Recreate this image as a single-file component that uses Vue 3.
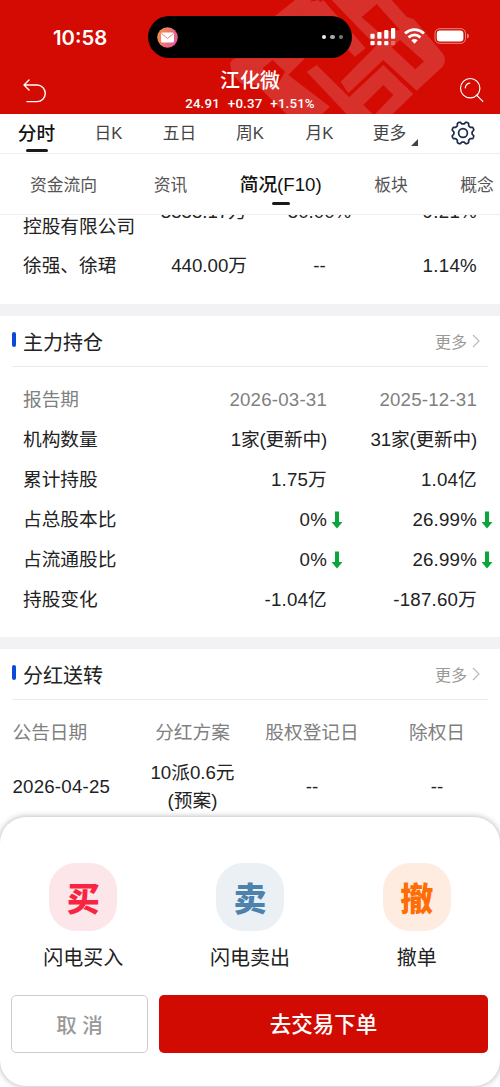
<template>
  <div class="phone">
    <header class="header">
      <svg class="pattern" width="500" height="114" viewBox="0 0 500 114">
        <g transform="translate(220 0) scale(.3333)" fill="#d8302b" fill-rule="evenodd">
          <path d="M335 0H515L560 50L582 58L668 160Q682 180 668 200L590 272L490 180L385 280L362 245L468 138zM425 52L475 95L540 90L470 12zM540 120L515 142L586 208L612 184z" />
          <path d="M280 20L310 0L437 145L405 170L280 48z" />
          <path d="M490 195L580 282L512 348H425L378 300zM490 255L430 315L462 346L520 285z" />
          <path d="M260 215L290 195L445 348H385z" />
          <path d="M30 190Q35 172 62 175H255L205 225L330 320L300 348H205L110 255L62 250Q32 225 30 190zM128 205L175 250L195 215L158 180z" />
          <path d="M225 0H275L165 110V48zM270 5L295 0L345 50H225z" />
        </g>
      </svg>
      <div class="status">
        <span class="time">10:58</span>
        <div class="island">
          <svg width="21" height="21" viewBox="0 0 21 21">
            <defs>
              <linearGradient id="mail" x1="0" y1="0" x2="1" y2=".5">
                <stop offset="0" stop-color="#f29a3e" />
                <stop offset="1" stop-color="#e9599a" />
              </linearGradient>
            </defs>
            <circle cx="10.5" cy="10.5" r="10.3" fill="url(#mail)" />
            <rect x="4" y="5.5" width="13" height="10" rx="1.5" fill="#fff" />
            <path d="M4.5 6.5l6 5 6-5" fill="none" stroke="#ec8467" stroke-width="1" />
          </svg>
          <div class="dots"><i></i><i></i><i></i></div>
        </div>
        <svg class="signals" width="100" height="20" viewBox="0 0 100 20" fill="#fff">
          <rect x="0.4" y="6.7" width="4.2" height="5" rx="1" />
          <rect x="7.3" y="5" width="4.2" height="6.7" rx="1" />
          <rect x="14.2" y="3" width="4.2" height="8.7" rx="1" />
          <rect x="21" y="1" width="4.2" height="10.7" rx="1" />
          <rect x="0.4" y="14" width="4.2" height="4.3" rx="1" />
          <rect x="7.3" y="14" width="4.2" height="4.3" rx="1" />
          <rect x="14.2" y="14" width="4.2" height="4.3" rx="1" />
          <rect x="21" y="14" width="4.2" height="4.3" rx="1" opacity=".3" />
          <g fill="none" stroke="#fff" stroke-width="2.8">
            <path d="M35 6.4q9.500-7.600 19 0" />
            <path d="M38.500 10.300q6-4.800 12 0" />
          </g>
          <path d="M41.300 13.200q3.200-2.600 6.400 0L44.500 16.700z" />
          <rect x="65" y="1.700" width="30.500" height="14.600" rx="4.600" fill="none" stroke="#fff" stroke-opacity=".5" />
          <rect x="66.800" y="3.500" width="26.600" height="11" rx="3" />
          <path d="M97 6.600q2 .8 2 2.400t-2 2.400z" opacity=".5" />
        </svg>
      </div>
      <div class="nav">
        <svg width="26" height="26" viewBox="0 0 26 26" fill="none" stroke="#fff" stroke-width="1.4" stroke-linecap="round" stroke-linejoin="round">
          <path d="M7 3L2 8l5 5M2.500 8H15a8.300 8.300 0 0 1 0 16.600H5" />
        </svg>
        <div class="stock">
          <div class="stock-name">江化微</div>
          <div class="quote"><span>24.91</span><span>+0.37</span><span>+1.51%</span></div>
        </div>
        <svg width="26" height="26" viewBox="0 0 26 26" fill="none" stroke="#fff" stroke-width="1.200" stroke-linecap="round">
          <circle cx="11.200" cy="11.200" r="9.700" />
          <path d="M6.300 10.800q.5-4 4.500-4.600M17.800 18.300l6 6" />
          <path d="M17.300 18.400l1.500-1" />
        </svg>
      </div>
    </header>

    <nav class="tabs">
      <span v-for="(t, i) in tabs" :key="t" class="tab" :class="{ active: i === 0, more: t === '更多' }">{{ t }}</span>
      <span class="gear">
        <svg width="26" height="26" viewBox="0 0 26 26" fill="none" stroke="#1b2b4b" stroke-width="1.700" stroke-linejoin="round">
          <path :d="gearPath" />
          <circle cx="13" cy="13" r="4.400" />
        </svg>
      </span>
    </nav>
    <nav class="subtabs">
      <span v-for="t in subtabs" :key="t" class="subtab" :class="{ active: t === '简况(F10)' }">{{ t }}</span>
    </nav>

    <main class="content">
      <section class="holders">
        <div class="holder tall">
          <span><br />控股有限公司</span><span>3555.17万</span><span>50.00%</span><span>9.21%</span>
        </div>
        <div class="holder">
          <span>徐强、徐珺</span><span>440.00万</span><span>--</span><span>1.14%</span>
        </div>
      </section>

      <section class="card">
        <div class="card-title">
          <i class="bar"></i><h3>主力持仓</h3><span class="link">更多</span>
          <svg width="8" height="14" viewBox="0 0 8 14" fill="none" stroke="#bbb" stroke-width="1.200"><path d="M1 1l6 6-6 6" /></svg>
        </div>
        <div class="positions">
          <div v-for="(r, i) in positions" :key="r.name" class="position" :class="{ muted: i === 0 }">
            <span>{{ r.name }}</span>
            <span v-for="v in r.values" :key="v" class="value">
              {{ v }}
              <svg v-if="r.down" class="down" width="12" height="18" viewBox="0 0 12 18" fill="#0aa63c">
                <path d="M4 0.500h4v10.500h3.500L6 17.500 0.500 11H4z" />
              </svg>
            </span>
          </div>
        </div>
      </section>

      <section class="card">
        <div class="card-title">
          <i class="bar"></i><h3>分红送转</h3><span class="link">更多</span>
          <svg width="8" height="14" viewBox="0 0 8 14" fill="none" stroke="#bbb" stroke-width="1.200"><path d="M1 1l6 6-6 6" /></svg>
        </div>
        <div class="dividend muted">
          <span>公告日期</span><span>分红方案</span><span>股权登记日</span><span>除权日</span>
        </div>
        <div class="dividend body">
          <span class="date">2026-04-25</span><span>10派0.6元<br />(预案)</span><span>--</span><span>--</span>
        </div>
      </section>
    </main>

    <div class="sheet">
      <div class="actions">
        <div v-for="a in actions" :key="a.label" class="action">
          <div class="action-icon" :class="a.type">{{ a.icon }}</div>
          <span>{{ a.label }}</span>
        </div>
      </div>
      <div class="buttons">
        <button class="btn cancel">取 消</button>
        <button class="btn trade">去交易下单</button>
      </div>
    </div>
  </div>
</template>

<script setup>
const tabs = ['分时', '日K', '五日', '周K', '月K', '更多']
const subtabs = ['资金流向', '资讯', '简况(F10)', '板块', '概念']

const positions = [
  { name: '报告期', values: ['2026-03-31', '2025-12-31'] },
  { name: '机构数量', values: ['1家(更新中)', '31家(更新中)'] },
  { name: '累计持股', values: ['1.75万', '1.04亿'] },
  { name: '占总股本比', values: ['0%', '26.99%'], down: true },
  { name: '占流通股比', values: ['0%', '26.99%'], down: true },
  { name: '持股变化', values: ['-1.04亿', '-187.60万'] },
]

const actions = [
  { label: '闪电买入', icon: '买', type: 'buy' },
  { label: '闪电卖出', icon: '卖', type: 'sell' },
  { label: '撤单', icon: '撤', type: 'revoke' },
]

// eight rounded teeth
const gearPath = (() => {
  const pts = []
  for (let i = 0; i < 96; i++) {
    const a = (i / 96) * Math.PI * 2
    const r = 10.2 + 1.1 * Math.tanh(2.5 * Math.cos(8 * a + Math.PI))
    pts.push(`${(13 + r * Math.cos(a)).toFixed(2)} ${(13 + r * Math.sin(a)).toFixed(2)}`)
  }
  return 'M' + pts.join('L') + 'z'
})()
</script>

<style>
body { background: #fff; }
</style>

<style scoped>
* { box-sizing: border-box; }
.phone {
  position: relative; width: 500px; height: 1087px; overflow: hidden; background: #fff;
  display: flex; flex-direction: column;
  font-family: "Liberation Sans", "Noto Sans CJK SC", sans-serif; font-size: 18.7px; color: #222;
}

.header { position: relative; height: 114px; flex: none; background: #d30b02; color: #fff; overflow: hidden; }
.pattern { position: absolute; left: 0; top: 0; }
.status { position: relative; display: flex; align-items: center; padding: 16px 0 0 53px; height: 58px; }
.time { width: 95px; font: 600 20.3px/42px Inter, sans-serif; padding-top: 1px; }
.island {
  width: 204px; height: 42px; border-radius: 21px; background: #000;
  display: flex; align-items: center; justify-content: space-between; padding: 0 9px;
}
.dots { display: flex; gap: 4px; }
.dots i { width: 4.4px; height: 4.4px; border-radius: 50%; background: #eee; }
.dots i:nth-child(2) { background: #aaa; }
.dots i:nth-child(3) { background: #777; }
.signals { margin-left: 18px; }
.nav { position: relative; display: grid; grid-template-columns: 26px 1fr 26px; padding: 0 15px 0 22px; height: 56px; }
.nav > svg { margin-top: 19px; }
.stock { padding-right: 7px; }
.stock-name { font-size: 20px; font-weight: 500; line-height: 26px; margin-top: 10px; text-align: center; }
.quote { display: flex; justify-content: center; gap: 8px; font: 500 13.3px/18px Roboto, sans-serif; letter-spacing: .15px; margin-top: 1px; }

.tabs {
  display: grid; grid-template-columns: 73px 71px 71px 70px 69px 71px 75px; flex: none;
  height: 40px; border-bottom: 1px solid #eee; font-size: 16.7px; line-height: 39px; color: #444; text-align: center;
}
.tab { position: relative; }
.tab.active { font-size: 18.7px; font-weight: 500; color: #111; }
.tab.active::after, .subtab.active::after {
  content: ""; position: absolute; left: 50%; bottom: 1px; width: 22px; height: 3px; margin-left: -11px;
  border-radius: 2px; background: #1a1a1a;
}
.tab.more::after {
  content: ""; position: absolute; right: 7px; bottom: 7px;
  border-left: 7px solid transparent; border-bottom: 7px solid #444;
}
.gear { display: flex; align-items: center; justify-content: center; height: 38px; }
.subtabs {
  display: flex; gap: 52.5px; flex: none; height: 61px; padding-left: 30px; border-bottom: 1px solid #eee;
  font-size: 16.8px; line-height: 64px; color: #555; white-space: nowrap; overflow: hidden;
}
.subtab { position: relative; }
.subtab:first-child { margin-right: 4px; }
.subtab.active { font-size: 18.7px; line-height: 61px; font-weight: 500; color: #111; }
.subtab.active::after { bottom: auto; top: 48px; width: 18px; margin-left: -9px; }

.content { flex: 1; overflow: hidden; }
.holders { display: flow-root; height: 89px; }
.holder { display: grid; grid-template-columns: 153px 94px 145px 85px; align-items: center; height: 27px; line-height: 27px; margin-top: 12px; }
.holder.tall { height: 54px; margin-top: -29px; }
.holder span { text-align: right; white-space: nowrap; }
.holder span:first-child { padding-left: 23px; text-align: left; }
.holder span:nth-child(3) { text-align: center; }
.holder span:nth-child(4) { letter-spacing: .3px; }
.holder.tall span:not(:first-child) { padding-bottom: 3px; }

.card { border-top: 12px solid #f2f2f4; height: 333px; }
.card-title { display: flex; align-items: center; height: 51px; margin: 0 12px; padding-right: 8px; border-bottom: 1px solid #ebebeb; }
.bar { width: 4px; height: 15px; border-radius: 2px; background: #0c4bd8; margin-right: 7px; margin-top: -3px; }
.card-title h3 { flex: 1; margin: 0; font-size: 20px; font-weight: 400; }
.link { font-size: 16px; color: #999; margin-right: 5px; }
.positions { padding-top: 13px; }
.position { display: grid; grid-template-columns: 177px 150px 150px; height: 40px; line-height: 40px; }
.position > span:first-child { padding-left: 23px; }
.value { position: relative; text-align: right; white-space: nowrap; letter-spacing: .2px; }
.position:nth-child(2) .value { letter-spacing: -.2px; }
.down { position: absolute; left: 100%; top: 11px; margin-left: 4px; }
.muted { color: #808080; }
.dividend {
  display: grid; grid-template-columns: 130px 125px 114px 136px; align-items: center; height: 40px;
  margin-top: 13px; text-align: center; line-height: 27.5px; white-space: nowrap;
}
.dividend span:first-child { text-align: left; padding-left: 12.5px; }
.dividend.body { margin-top: 6px; height: 55px; }
.date { letter-spacing: .2px; }

.sheet {
  position: absolute; left: 0; top: 817px; width: 500px; height: 269px; border-radius: 26px; background: #fff;
  box-shadow: 0 0 6px rgba(0, 0, 0, .32);
}
.actions { display: grid; grid-template-columns: repeat(3, 1fr); padding-top: 46px; height: 178px; }
.action { display: flex; flex-direction: column; align-items: center; font-size: 20px; line-height: 28px; gap: 13px; }
.action-icon {
  width: 68px; height: 68px; border-radius: 27px; text-align: center;
  font: 900 33px/68px "Noto Sans CJK SC", sans-serif;
}
.buy { background: #fde6e9; color: #f9243f; }
.sell { background: #ebf0f5; color: #4c82ac; }
.revoke { background: #feece0; color: #ff6d05; }
.buttons { display: flex; gap: 11px; padding: 0 12px 0 11px; }
.btn {
  height: 58px; padding: 2px 0 0; border: 0; border-radius: 5px; font: 500 20.5px/56px "Liberation Sans", "Noto Sans CJK SC", sans-serif;
}
.cancel { width: 137px; background: #fff; border: 1px solid #ccc; color: #999; }
.trade { flex: 1; background: #d10b02; color: #fff; font-size: 21.5px; }
</style>
